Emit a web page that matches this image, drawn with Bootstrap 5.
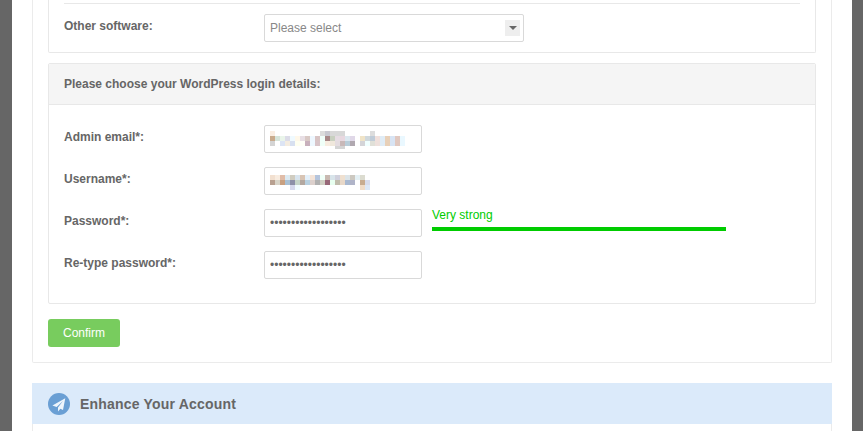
<!DOCTYPE html>
<html lang="en">
<head>
<meta charset="utf-8">
<title>WordPress login details</title>
<link href="https://cdn.jsdelivr.net/npm/bootstrap@5.3.0/dist/css/bootstrap.min.css" rel="stylesheet">
<style>
html,body{height:431px;overflow:hidden}
body{background:#fff;font-family:"Liberation Sans",Arial,sans-serif;font-size:12px;color:#666}
.shell{height:431px;border-left:12px solid #666;border-right:11px solid #666;padding:0 20px 0 20px;overflow:hidden}
.outer{border:1px solid #ebebeb;border-top:0;border-radius:0 0 2px 2px;padding:0 15px 15px;height:363px}
.pane{border:1px solid #e8e8e8;border-radius:2px;--bs-card-bg:#fff;--bs-card-border-color:#e8e8e8}
.pane-a{border-top:0;height:53px;padding:3px 15px 0;border-radius:0 0 2px 2px}
.rule{border-top:1px solid #e8e8e8;height:1px}
.form-line{display:flex;align-items:flex-start}
.lbl{width:200px;flex:none;font-weight:700;color:#666;line-height:14px;padding-top:5px}
.pane-a .form-line{margin-top:10px}
.pick{width:260px;height:28px;border:1px solid #d9d9d9;border-radius:2px;padding:0 3px 0 5px;color:#888;line-height:26px}
.pick-arrow{width:15px;height:16px;background:#eee}
.pick-arrow i{display:block;width:0;height:0;border:4px solid transparent;border-top:4px solid #666;border-bottom:0}
.pane-b{margin-top:10px;height:241px}
.pane-b .card-header{height:41px;background:#f5f5f5;border-bottom:1px solid #e8e8e8;padding:0 15px;font-weight:700;color:#666;line-height:40px;border-radius:2px 2px 0 0}
.pane-b .card-body{padding:20px 15px 0}
.fld{height:28px;width:158px;border:1px solid #d9d9d9;border-radius:2px;padding:0 5px;font-size:12px;font-family:"Liberation Sans",Arial,sans-serif;color:#666;flex:none;box-shadow:none;background:#fff}
.fld:focus{box-shadow:none;border-color:#d9d9d9}
.blur{display:block;width:156px;height:26px}
.form-line + .form-line{margin-top:14px}
.meter{width:294px;margin-left:10px;margin-top:-1px}
.meter-txt{color:#0c0;line-height:14px}
.meter-bar{height:4px;background:#0c0;margin-top:5px}
.go{background:#78cc5e;border:0;border-radius:3px;color:#fff;font-size:12px;font-weight:400;width:72px;height:28px;padding:0;margin-top:15px;font-family:"Liberation Sans",Arial,sans-serif}
.go:hover{background:#78cc5e;color:#fff}
.promo{margin:20px 0 0;border:1px solid #ebebeb;border-top:0;height:60px}
.promo-head{height:41px;background:#dbeafa;margin:0 -1px;padding:0 16px;gap:10px}
.promo-head span{font-size:14px;font-weight:700;color:#666;letter-spacing:.2px;padding-top:1px}
</style>
</head>
<body>
<div class="shell">
  <div class="outer">
    <div class="card pane pane-a">
      <div class="rule"></div>
      <div class="form-line">
        <div class="lbl">Other software:</div>
        <div class="pick d-flex align-items-center justify-content-between">
          <span>Please select</span>
          <span class="pick-arrow d-flex align-items-center justify-content-center"><i></i></span>
        </div>
      </div>
    </div>
    <div class="card pane pane-b">
      <div class="card-header">Please choose your WordPress login details:</div>
      <div class="card-body">
        <div class="form-line">
          <div class="lbl">Admin email*:</div>
          <div class="fld p-0"><svg class="blur" viewBox="0 0 156 26" shape-rendering="crispEdges"><g transform="translate(5,5)">
<rect x="0" y="0" width="5" height="5" fill="#faeee3"/><rect x="50" y="0" width="5" height="5" fill="#dcdcdc"/><rect x="55" y="0" width="5" height="5" fill="#c8c8d0"/><rect x="60" y="0" width="15" height="5" fill="#d8d8d8"/><rect x="100" y="0" width="5" height="5" fill="#ddd"/>
<rect x="0" y="5" width="5" height="5" fill="#c9aa8c"/><rect x="5" y="5" width="5" height="5" fill="#d6e4da"/><rect x="10" y="5" width="5" height="5" fill="#eaf5ea"/><rect x="15" y="5" width="5" height="5" fill="#dcdce8"/><rect x="20" y="5" width="5" height="5" fill="#f0faff"/><rect x="25" y="5" width="5" height="5" fill="#fff8ea"/><rect x="30" y="5" width="5" height="5" fill="#e8dfe5"/><rect x="35" y="5" width="5" height="5" fill="#d9c9c5"/><rect x="40" y="5" width="5" height="5" fill="#eef7ff"/><rect x="45" y="5" width="5" height="5" fill="#d8c4c4"/><rect x="50" y="5" width="5" height="5" fill="#f0fffa"/><rect x="55" y="5" width="5" height="5" fill="#a88888"/><rect x="60" y="5" width="5" height="5" fill="#c8d0c0"/><rect x="65" y="5" width="5" height="5" fill="#e6dce3"/><rect x="70" y="5" width="5" height="5" fill="#e8d8e0"/><rect x="75" y="5" width="5" height="5" fill="#dce8f0"/><rect x="80" y="5" width="5" height="5" fill="#e0d8e8"/><rect x="90" y="5" width="5" height="5" fill="#f0e4c8"/><rect x="95" y="5" width="5" height="5" fill="#d0d8dc"/><rect x="100" y="5" width="5" height="5" fill="#c0ccd8"/><rect x="105" y="5" width="5" height="5" fill="#f0e0dc"/><rect x="110" y="5" width="5" height="5" fill="#e0ecf6"/><rect x="115" y="5" width="5" height="5" fill="#e8d0b8"/><rect x="120" y="5" width="5" height="5" fill="#d8e4f4"/><rect x="125" y="5" width="5" height="5" fill="#e0c8c0"/><rect x="130" y="5" width="5" height="5" fill="#eaf8ff"/>
<rect x="0" y="10" width="5" height="5" fill="#d4d4d4"/><rect x="10" y="10" width="5" height="5" fill="#dce4f4"/><rect x="15" y="10" width="5" height="5" fill="#f4ece0"/><rect x="20" y="10" width="5" height="5" fill="#d8e0f0"/><rect x="25" y="10" width="5" height="5" fill="#fffff0"/><rect x="30" y="10" width="5" height="5" fill="#fffff8"/><rect x="35" y="10" width="5" height="5" fill="#c8b0bc"/><rect x="40" y="10" width="5" height="5" fill="#eef8ff"/><rect x="45" y="10" width="5" height="5" fill="#d8c4c8"/><rect x="50" y="10" width="5" height="5" fill="#f0fff8"/><rect x="55" y="10" width="5" height="5" fill="#f8ece0"/><rect x="60" y="10" width="5" height="5" fill="#f0e8dc"/><rect x="65" y="10" width="5" height="5" fill="#e4dce0"/><rect x="70" y="10" width="5" height="5" fill="#c8b8b8"/><rect x="75" y="10" width="5" height="5" fill="#b8ccd8"/><rect x="80" y="10" width="5" height="5" fill="#b0a8b0"/><rect x="90" y="10" width="5" height="5" fill="#d4d4d8"/><rect x="95" y="10" width="5" height="5" fill="#f0ffff"/><rect x="100" y="10" width="5" height="5" fill="#e0e0d8"/><rect x="105" y="10" width="5" height="5" fill="#eee0dc"/><rect x="110" y="10" width="5" height="5" fill="#e0ecf6"/><rect x="115" y="10" width="5" height="5" fill="#e8d0b8"/><rect x="120" y="10" width="5" height="5" fill="#d8e4f4"/><rect x="125" y="10" width="5" height="5" fill="#e0c8c0"/><rect x="130" y="10" width="5" height="5" fill="#eaf8ff"/>
<rect x="65" y="15" width="10" height="3" fill="#d4d4d4"/>
</g></svg></div>
        </div>
        <div class="form-line">
          <div class="lbl">Username*:</div>
          <div class="fld p-0"><svg class="blur" viewBox="0 0 156 26" shape-rendering="crispEdges"><g transform="translate(5,7)">
<rect x="0" y="0" width="5" height="5" fill="#f2e0d0"/><rect x="5" y="0" width="5" height="5" fill="#f8ece0"/><rect x="10" y="0" width="5" height="5" fill="#e0bca8"/><rect x="15" y="0" width="5" height="5" fill="#dceaf2"/><rect x="20" y="0" width="5" height="5" fill="#d0ccc0"/><rect x="25" y="0" width="5" height="5" fill="#d8e4ee"/><rect x="30" y="0" width="5" height="5" fill="#d8c4b4"/><rect x="35" y="0" width="5" height="5" fill="#e4f0fa"/><rect x="40" y="0" width="5" height="5" fill="#f4e4d8"/><rect x="45" y="0" width="5" height="5" fill="#b4c4dc"/><rect x="50" y="0" width="5" height="5" fill="#f0fff8"/><rect x="55" y="0" width="5" height="5" fill="#c8b8b0"/><rect x="60" y="0" width="5" height="5" fill="#d8e4ea"/><rect x="65" y="0" width="5" height="5" fill="#d0d0dc"/><rect x="70" y="0" width="5" height="5" fill="#efe0d0"/><rect x="75" y="0" width="5" height="5" fill="#dce4e8"/><rect x="80" y="0" width="5" height="5" fill="#ccc8c0"/><rect x="85" y="0" width="5" height="5" fill="#e4f0f4"/><rect x="90" y="0" width="5" height="5" fill="#dcdcd0"/>
<rect x="0" y="5" width="5" height="5" fill="#b8a090"/><rect x="5" y="5" width="5" height="5" fill="#d8d4c8"/><rect x="10" y="5" width="5" height="5" fill="#c8a080"/><rect x="15" y="5" width="5" height="5" fill="#a8c0d4"/><rect x="20" y="5" width="5" height="5" fill="#8c90a8"/><rect x="25" y="5" width="5" height="5" fill="#c4d4c8"/><rect x="30" y="5" width="5" height="5" fill="#b4a8a0"/><rect x="35" y="5" width="5" height="5" fill="#b8d0e0"/><rect x="40" y="5" width="5" height="5" fill="#dcd0cc"/><rect x="45" y="5" width="5" height="5" fill="#b0b0b0"/><rect x="50" y="5" width="5" height="5" fill="#d0d0c4"/><rect x="55" y="5" width="5" height="5" fill="#986878"/><rect x="60" y="5" width="5" height="5" fill="#e8fff0"/><rect x="65" y="5" width="5" height="5" fill="#c0bcac"/><rect x="70" y="5" width="5" height="5" fill="#e8d8c8"/><rect x="75" y="5" width="5" height="5" fill="#a8b8d0"/><rect x="80" y="5" width="5" height="5" fill="#b0b4c8"/><rect x="90" y="5" width="5" height="5" fill="#c8ac90"/><rect x="95" y="5" width="5" height="5" fill="#d8dcec"/>
<rect x="20" y="10" width="5" height="5" fill="#d4d8ec"/><rect x="25" y="10" width="5" height="5" fill="#f0fcff"/><rect x="90" y="10" width="5" height="5" fill="#f0dcc8"/><rect x="95" y="10" width="5" height="5" fill="#dce8f8"/>
</g></svg></div>
        </div>
        <div class="form-line">
          <div class="lbl">Password*:</div>
          <input class="form-control fld" type="password" value="abcdefghijklmnopqr" aria-label="Password">
          <div class="meter">
            <div class="meter-txt">Very strong</div>
            <div class="meter-bar"></div>
          </div>
        </div>
        <div class="form-line">
          <div class="lbl">Re-type password*:</div>
          <input class="form-control fld" type="password" value="abcdefghijklmnopqr" aria-label="Re-type password">
        </div>
      </div>
    </div>
    <button class="btn go" type="button">Confirm</button>
  </div>
  <div class="promo">
    <div class="promo-head d-flex align-items-center">
      <svg width="22" height="22" viewBox="0 0 22 22"><circle cx="11" cy="11" r="11" fill="#6a9fd4"/><path d="M17.3 5.3 4.4 12.4l4.2 1.5L15 8l-5 6.6v3.9l2.4-2.8 2.6 1.2z" fill="#eef5fc"/></svg>
      <span>Enhance Your Account</span>
    </div>
  </div>
</div>
</body>
</html>
